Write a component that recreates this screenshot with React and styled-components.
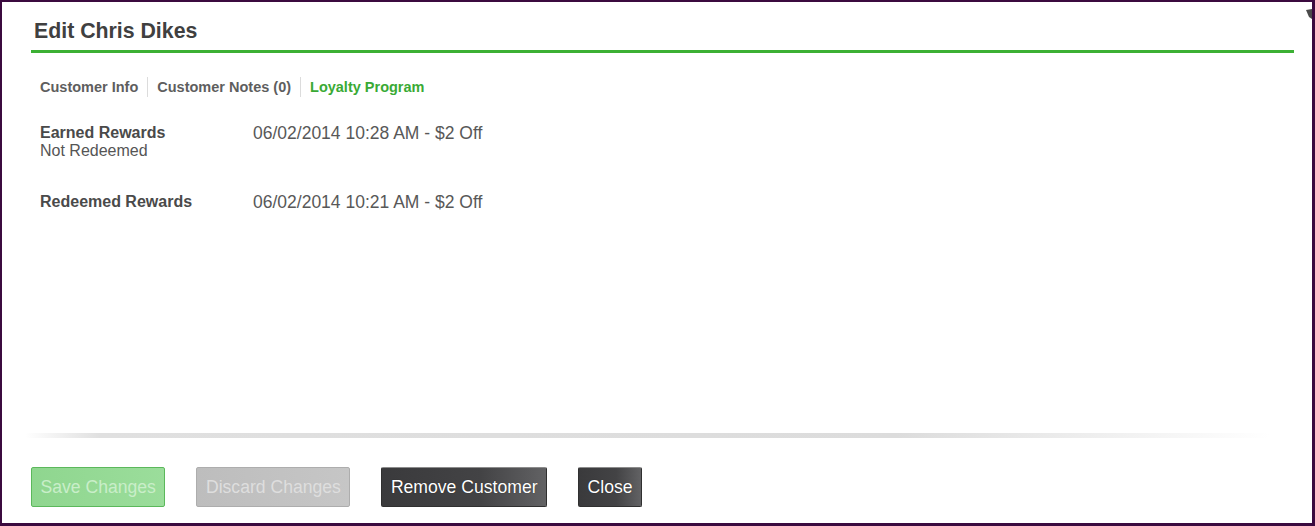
import React from 'react'
import styled, { createGlobalStyle } from 'styled-components'

const GlobalStyle = createGlobalStyle`
  html, body {
    margin: 0;
    padding: 0;
    background: #fff;
  }
  body {
    font-family: "Liberation Sans", Arial, sans-serif;
  }
`

const Frame = styled.div`
  position: relative;
  box-sizing: border-box;
  width: 1315px;
  height: 526px;
  border: solid #3b0a3f;
  border-width: 2px 3px 3px 2px;
  background: #fff;
  display: flex;
  flex-direction: column;
`

const CloseCorner = styled.svg`
  position: absolute;
  top: 7px;
  right: 0;
  width: 6px;
  height: 10px;
`

const Header = styled.div`
  margin: 0 18px 0 29px;
  padding: 17px 0 7px 3px;
  border-bottom: 3px solid #3cb034;
`

const Title = styled.h1`
  margin: 0;
  font-size: 21.3px;
  line-height: 24px;
  font-weight: bold;
  color: #404040;
`

const Tabs = styled.div`
  display: flex;
  margin: 24px 0 0 29px;
`

const Tab = styled.div`
  padding: 0 9px;
  font-size: 14.5px;
  line-height: 20px;
  font-weight: bold;
  color: ${p => (p.active ? '#3aaa35' : '#5e5e5e')};
  & + & {
    border-left: 1px solid #dcdcdc;
  }
`

const Rows = styled.div`
  flex: 1;
  display: flex;
  flex-direction: column;
  gap: 33px;
  margin: 27px 0 0 38px;
`

const Row = styled.div`
  display: grid;
  grid-template-columns: 213px 1fr;
  align-items: start;
`

const Label = styled.div`
  font-size: 16px;
  line-height: 18px;
  font-weight: bold;
  color: #4a4a4a;
`

const SubLabel = styled.div`
  font-size: 16px;
  line-height: 18px;
  color: #555;
`

const Value = styled.div`
  font-size: 17.5px;
  line-height: 18px;
  color: #585858;
`

const Divider = styled.div`
  height: 5px;
  margin: 0 0 29px 23px;
  width: 1245px;
  background: linear-gradient(
    to right,
    rgba(221, 221, 221, 0) 0%,
    #e0e0e0 6%,
    #dcdcdc 70%,
    rgba(221, 221, 221, 0) 100%
  );
  border-radius: 2px;
`

const Footer = styled.div`
  display: flex;
  gap: 31px;
  padding: 0 0 16px 29px;
`

const variants = {
  save: `
    background: linear-gradient(to right, #8fd68f, #9bdd9b);
    border-color: #5bb85b;
    color: #c9eec9;
  `,
  discard: `
    background: linear-gradient(to right, #bdbdbd, #c6c6c6);
    border-color: #adadad;
    color: #dedede;
  `,
  dark: `
    background: linear-gradient(to right, #3a3a3c, #434345 60%, #626264);
    border-color: #303030;
    border-top-color: #8c8c8c;
    color: #fff;
    text-shadow: 0 0 1px rgba(0, 0, 0, 0.6);
  `
}

const Button = styled.button`
  box-sizing: border-box;
  height: 40px;
  padding: 0 8.5px;
  border: 1px solid;
  border-radius: 2px;
  font-family: "Liberation Sans", Arial, sans-serif;
  font-size: 17.6px;
  cursor: pointer;
  ${p => variants[p.variant]}
`

export default function App () {
  return (
    <>
      <GlobalStyle />
      <Frame>
        <CloseCorner viewBox='0 0 6 10'>
          <polygon points='0,1 6,0 6,10 3,8' fill='#4a4a4a' />
        </CloseCorner>
        <Header>
          <Title>Edit Chris Dikes</Title>
        </Header>
        <Tabs>
          <Tab>Customer Info</Tab>
          <Tab>Customer Notes (0)</Tab>
          <Tab active>Loyalty Program</Tab>
        </Tabs>
        <Rows>
          <Row>
            <div>
              <Label>Earned Rewards</Label>
              <SubLabel>Not Redeemed</SubLabel>
            </div>
            <Value>06/02/2014 10:28 AM - $2 Off</Value>
          </Row>
          <Row>
            <Label>Redeemed Rewards</Label>
            <Value>06/02/2014 10:21 AM - $2 Off</Value>
          </Row>
        </Rows>
        <Divider />
        <Footer>
          <Button variant='save'>Save Changes</Button>
          <Button variant='discard'>Discard Changes</Button>
          <Button variant='dark'>Remove Customer</Button>
          <Button variant='dark'>Close</Button>
        </Footer>
      </Frame>
    </>
  )
}
